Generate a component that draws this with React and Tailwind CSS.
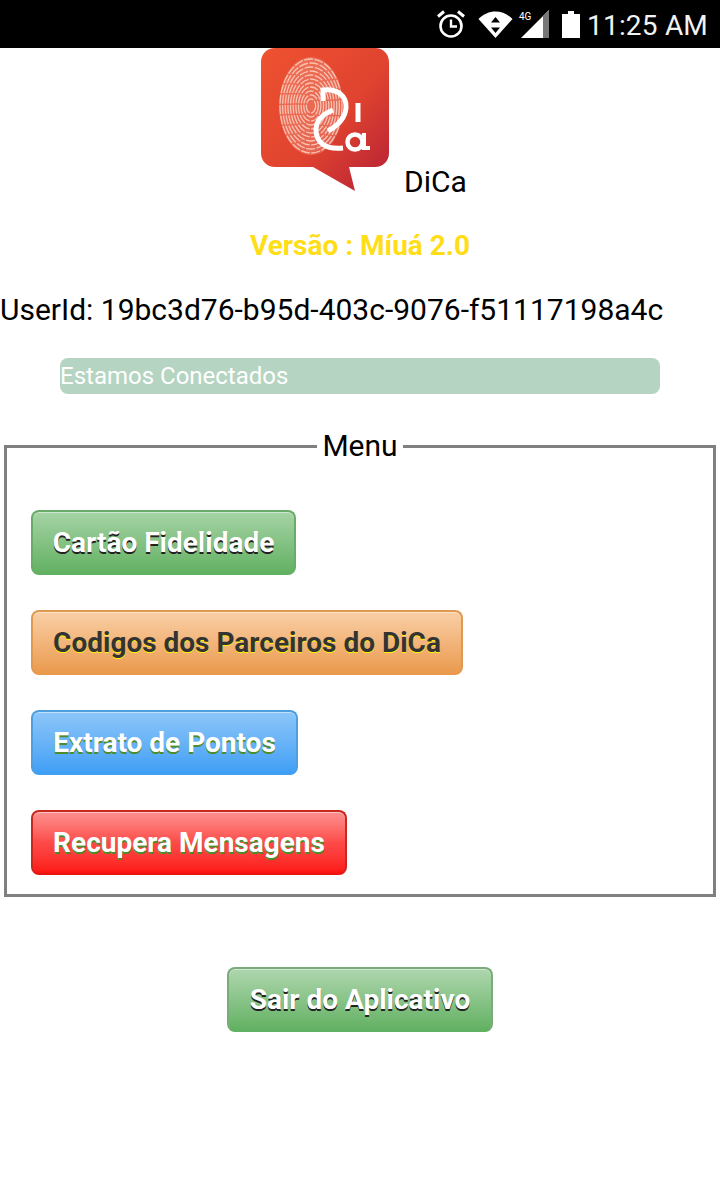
const buttons = [
  {
    label: 'Cartão Fidelidade',
    className: 'w-[265px] border-[#69ab69] border-b-[#62b162] from-[#a5d3a5] to-[#62b162] text-white [text-shadow:0_2px_0_#222]',
  },
  {
    label: 'Codigos dos Parceiros do DiCa',
    className: 'w-[432px] border-[#e09a50] border-b-[#ea9a4c] from-[#f9cfa5] to-[#ea9a4c] text-[#333333] [text-shadow:0_1px_0_#fff200]',
  },
  {
    label: 'Extrato de Pontos',
    className: 'w-[267px] border-[#4f9fdf] border-b-[#3f9ff5] from-[#8cc6f9] to-[#3f9ff5] text-white [text-shadow:0_2px_0_#4c8c2c]',
  },
  {
    label: 'Recupera Mensagens',
    className: 'w-[316px] border-[#c8281e] border-b-[#e8140f] from-[#fb8f8f] via-[#fc4a48] to-[#fc1410] text-white [text-shadow:0_2px_0_#4c8c2c]',
  },
];

const rings = [47, 43, 39, 35, 31, 27, 23, 19, 15, 11, 7];

const StatusIcons = () => (
  <svg width="165" height="48" viewBox="0 0 165 48" className="shrink-0">
    {/* alarm */}
    <circle cx="32" cy="26" r="10.5" fill="none" stroke="#fff" strokeWidth="2.6" />
    <path d="M32 19.5V26.5H38" fill="none" stroke="#fff" strokeWidth="2.4" />
    <path d="M19 16.5L25 11.5M45 16.5L39 11.5" stroke="#fff" strokeWidth="3" />
    {/* wifi with data arrows */}
    <path d="M59.5 19C69 9 84 9 93.5 19L76.5 38Z" fill="#fff" />
    <path d="M76.5 17L81 22.5H72Z M76.5 33L72 27.5H81Z" fill="#000" />
    {/* signal */}
    <path d="M102 38L130 10V38Z" fill="#fff" />
    <path d="M124 16L130 10V38H124Z" fill="#777" />
    <text x="100" y="20" fill="#fff" fontSize="10" fontFamily="Roboto, sans-serif">4G</text>
    {/* battery */}
    <path d="M143 14H149V11H155V14H161V38H143Z" fill="#fff" />
  </svg>
);

const Logo = () => (
  <svg width="128" height="144" viewBox="0 0 128 144" className="shrink-0 blur-[0.5px]">
    <defs>
      <linearGradient id="bubble" x1="0" y1="0" x2="1" y2="1">
        <stop offset="0" stopColor="#ee5230" />
        <stop offset="0.55" stopColor="#e0432f" />
        <stop offset="1" stopColor="#b41f36" />
      </linearGradient>
    </defs>
    <path
      d="M14 0H114C122 0 128 6 128 14V105C128 113 122 119 114 119H88L94 143L52 119H14C6 119 0 113 0 105V14C0 6 6 0 14 0Z"
      fill="url(#bubble)"
    />
    {/* fingerprint */}
    <ellipse cx="50" cy="58" rx="32" ry="49" fill="#f9b8a4" opacity="0.3" />
    <g fill="none" stroke="#fbd3c6" strokeWidth="1.3" strokeDasharray="9 1.5" opacity="0.85">
      {rings.map(r => (
        <ellipse key={r} cx="50" cy="58" rx={r * 0.66} ry={r} />
      ))}
    </g>
    {/* swirl and letters */}
    <g fill="none" stroke="#fff" strokeWidth="5">
      <path d="M62 53V42C76 40 86 48 85 60C84 71 76 78 67 83" />
      <path d="M72 62C62 66 55 73 55 82C55 94 64 102 82 100" />
      <path d="M97 55V74" />
      <circle cx="94" cy="94" r="7.5" strokeWidth="4.5" />
      <path d="M103 85V100H109" strokeWidth="4" />
    </g>
  </svg>
);

const App = () => {
  return (
    <div className="w-[720px] h-[1193px] bg-white font-['Roboto',sans-serif] text-black overflow-hidden">
      {/* Status bar */}
      <div className="h-12 bg-black flex items-center justify-end pr-3 text-white">
        <StatusIcons />
        <span className="ml-[3px] mt-[3px] text-[28px] leading-none tracking-[0.2px] text-[#f2f2f2]">11:25 AM</span>
      </div>

      {/* Logo */}
      <div className="flex items-end justify-center h-36 pl-2">
        <Logo />
        <span className="ml-[15px] text-[30px] leading-5">DiCa</span>
      </div>

      <p className="mt-[38px] text-center text-[28px] leading-8 font-bold text-[#ffdd17]">Versão : Míuá 2.0</p>

      <p className="mt-8 text-[30px] leading-8">UserId: 19bc3d76-b95d-403c-9076-f51117198a4c</p>

      <div className="mt-8 mx-[60px] h-9 rounded-lg bg-[#b5d4c1] text-white text-[24px] leading-9">
        Estamos Conectados
      </div>

      {/* Menu */}
      <fieldset className="mt-9 mx-1 h-[467px] border-[3px] border-[#808080] px-6">
        <legend className="mx-auto px-[5px] text-[30px] leading-8">Menu</legend>
        <div className="mt-[48px] flex flex-col gap-[35px]">
          {buttons.map(b => (
            <button
              key={b.label}
              className={`h-[65px] rounded-lg border-2 bg-gradient-to-b text-[28px] font-bold leading-none text-center shadow-[inset_0_1px_0_rgba(255,255,255,0.45)] ${b.className}`}
            >
              {b.label}
            </button>
          ))}
        </div>
      </fieldset>

      <div className="mt-[70px] flex justify-center">
        <button className="w-[266px] h-[65px] rounded-lg border-2 border-[#7aab7a] border-b-[#62b162] bg-gradient-to-b from-[#aed6ae] to-[#62b162] text-[28px] font-bold leading-none text-white shadow-[inset_0_1px_0_rgba(255,255,255,0.45)] [text-shadow:0_2px_0_#222]">
          Sair do Aplicativo
        </button>
      </div>
    </div>
  );
};

export default App;
